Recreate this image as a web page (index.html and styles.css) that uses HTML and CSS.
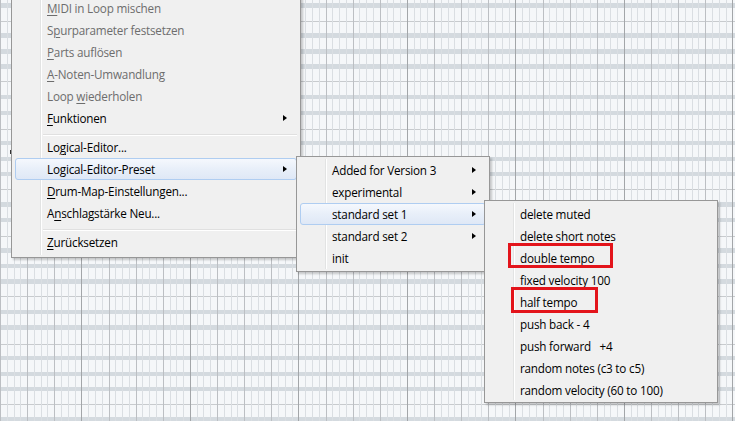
FILE: index.html
```html
<!DOCTYPE html>
<html lang="de">

<head>
    <meta charset="UTF-8">
    <title>Logical-Editor-Preset</title>
    <link rel="stylesheet" href="styles.css">
</head>

<body>
    <div class="editor">
        <div class="cursor-mark"></div>

        <!-- Hauptmenü -->
        <div class="menu menu-main">
            <div class="item disabled"><span class="label"><u>M</u>IDI in Loop mischen</span></div>
            <div class="item disabled"><span class="label">S<u>p</u>urparameter festsetzen</span></div>
            <div class="item disabled"><span class="label"><u>P</u>arts auflösen</span></div>
            <div class="item disabled"><span class="label"><u>A</u>-Noten-Umwandlung</span></div>
            <div class="item disabled"><span class="label">Loop <u>w</u>iederholen</span></div>
            <div class="item"><span class="label"><u>F</u>unktionen</span><span class="arrow"></span></div>
            <div class="separator"></div>
            <div class="item"><span class="label">Lo<u>g</u>ical-Editor...</span></div>
            <div class="item active"><span class="label">Logical-Editor-Preset</span><span class="arrow"></span></div>
            <div class="item"><span class="label"><u>D</u>rum-Map-Einstellungen...</span></div>
            <div class="item"><span class="label">A<u>n</u>schlagstärke Neu...</span></div>
            <div class="separator"></div>
            <div class="item"><span class="label"><u>Z</u>urücksetzen</span></div>
        </div>

        <!-- Preset-Ordner -->
        <div class="menu menu-preset">
            <div class="item"><span class="label">Added for Version 3</span><span class="arrow"></span></div>
            <div class="item"><span class="label">experimental</span><span class="arrow"></span></div>
            <div class="item active"><span class="label">standard set 1</span><span class="arrow"></span></div>
            <div class="item"><span class="label">standard set 2</span><span class="arrow"></span></div>
            <div class="item"><span class="label">init</span></div>
        </div>

        <!-- standard set 1 -->
        <div class="menu menu-set">
            <div class="item"><span class="label">delete muted</span></div>
            <div class="item"><span class="label">delete short notes</span></div>
            <div class="item"><span class="label">double tempo</span></div>
            <div class="item"><span class="label">fixed velocity 100</span></div>
            <div class="item"><span class="label">half tempo</span></div>
            <div class="item"><span class="label">push back - 4</span></div>
            <div class="item"><span class="label">push forward   +4</span></div>
            <div class="item"><span class="label">random notes (c3 to c5)</span></div>
            <div class="item"><span class="label">random velocity (60 to 100)</span></div>
        </div>

        <div class="highlight highlight-double"></div>
        <div class="highlight highlight-half"></div>
    </div>
</body>

</html>
```

FILE: styles.css
```css
body {
    margin: 0;
    font-family: "Open Sans", "Noto Sans", sans-serif;
    font-size: 11.7px;
    letter-spacing: -0.2px;
    overflow: hidden;
}

/* Key-Editor Raster im Hintergrund */
.editor {
    position: relative;
    width: 735px;
    height: 421px;
    overflow: hidden;
    background-color: #f5f7f9;
    background-image:
        repeating-linear-gradient(to right, transparent 0 81.4px, #a3a6a9 81.4px 82.4px, transparent 82.4px 108.5px),
        repeating-linear-gradient(to right, #bcbfc3 0 1px, transparent 1px 27.125px),
        repeating-linear-gradient(to right, #dadee2 0 1px, transparent 1px 6.78125px),
        repeating-linear-gradient(to bottom, transparent 0 21.2px, #c8cbce 21.2px 22.2px, transparent 22.2px 81.2px, #c8cbce 81.2px 82.2px, transparent 82.2px 107.45px),
        repeating-linear-gradient(to bottom,
            transparent 0 3.1px, #d4dadf 3.1px 7.5px,
            transparent 7.5px 33.45px, #d4dadf 33.45px 37.85px,
            transparent 37.85px 49.15px, #d4dadf 49.15px 53.55px,
            transparent 53.55px 64.2px, #d4dadf 64.2px 68.6px,
            transparent 68.6px 94.7px, #d4dadf 94.7px 99.1px,
            transparent 99.1px 107.45px);
}

.cursor-mark {
    position: absolute;
    left: 10px;
    top: 150px;
    width: 2px;
    height: 4px;
    background: #333;
}

/* Menüs */
.menu {
    position: absolute;
    box-sizing: border-box;
    display: flex;
    flex-direction: column;
    padding: 2px 3px;
    background: #f0f0f0;
    border: 1px solid #979797;
    box-shadow: 2px 2px 2px rgba(0, 0, 0, 0.2);
}

.menu::before {
    content: "";
    position: absolute;
    top: 2px;
    bottom: 2px;
    left: 28px;
    width: 1px;
    background: #e2e3e3;
    border-right: 1px solid #ffffff;
}

.menu-main {
    left: 11px;
    top: -6px;
    width: 290px;
    padding-bottom: 4px;
}

.menu-preset {
    left: 296px;
    top: 156px;
    width: 194px;
}

.menu-set {
    left: 484px;
    top: 200px;
    width: 234px;
    padding-bottom: 1px;
}

.item {
    position: relative;
    display: flex;
    align-items: center;
    height: 22px;
    box-sizing: border-box;
    padding-left: 31px;
    padding-right: 9px;
    color: #000;
    white-space: pre;
    border: 1px solid transparent;
    border-radius: 3px;
}

.item .label {
    flex: 1;
}

.item u {
    text-decoration-thickness: 1px;
    text-underline-offset: 2px;
}

.item.disabled {
    color: #6d6d6d;
}

.item.active {
    border-color: #afcdf1;
    background: linear-gradient(to bottom, #f5f8fd, #e8eff9 50%, #dfe8f6);
}

.arrow {
    width: 0;
    height: 0;
    border-left: 4px solid #000;
    border-top: 3.5px solid transparent;
    border-bottom: 3.5px solid transparent;
}

.separator {
    height: 7px;
    margin-left: 28px;
    position: relative;
}

.separator::after {
    content: "";
    position: absolute;
    left: 0;
    right: 0;
    top: 5px;
    height: 1px;
    background: #e0e0e0;
    border-bottom: 1px solid #fff;
}

/* rote Markierungen */
.highlight {
    position: absolute;
    box-sizing: border-box;
    border: 3px solid #e3141b;
}

.highlight-double {
    left: 508px;
    top: 243px;
    width: 105px;
    height: 25px;
}

.highlight-half {
    left: 511px;
    top: 287px;
    width: 87px;
    height: 26px;
}
```
